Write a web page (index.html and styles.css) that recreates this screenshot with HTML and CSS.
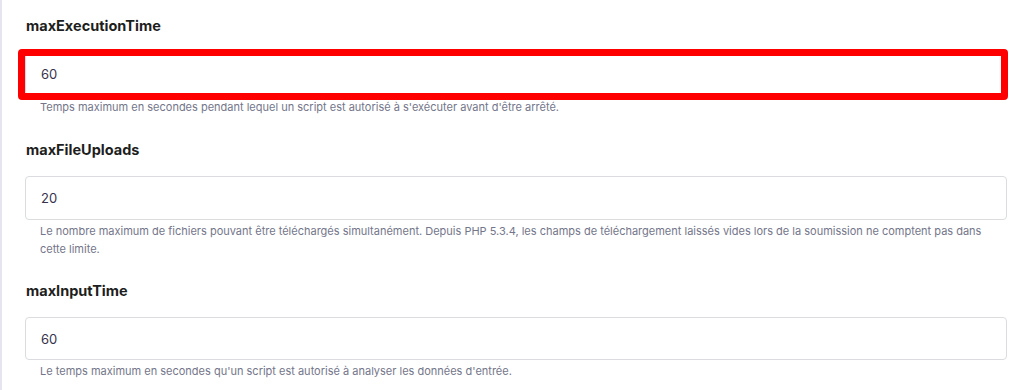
FILE: index.html
```html
<!DOCTYPE html>
<html lang="fr">
<head>
    <meta charset="UTF-8">
    <title>PHP options</title>
    <link rel="stylesheet" href="styles.css">
</head>
<body>
    <div class="page">
        <div class="field">
            <label class="field-label" for="maxExecutionTime">maxExecutionTime</label>
            <div class="field-box">
                <input class="field-input" id="maxExecutionTime" type="text" value="60">
                <span class="highlight"></span>
            </div>
            <p class="field-help">Temps maximum en secondes pendant lequel un script est autorisé à s'exécuter avant d'être arrêté.</p>
        </div>

        <div class="field">
            <label class="field-label" for="maxFileUploads">maxFileUploads</label>
            <div class="field-box">
                <input class="field-input" id="maxFileUploads" type="text" value="20">
            </div>
            <p class="field-help">Le nombre maximum de fichiers pouvant être téléchargés simultanément. Depuis PHP 5.3.4, les champs de téléchargement laissés vides lors de la soumission ne comptent pas dans cette limite.</p>
        </div>

        <div class="field">
            <label class="field-label" for="maxInputTime">maxInputTime</label>
            <div class="field-box">
                <input class="field-input short" id="maxInputTime" type="text" value="60">
            </div>
            <p class="field-help">Le temps maximum en secondes qu'un script est autorisé à analyser les données d'entrée.</p>
        </div>
    </div>
</body>
</html>
```

FILE: styles.css
```css
body {
    margin: 0;
    font-family: Inter, "Noto Sans", sans-serif;
    background-color: #fff;
}
.page {
    border-left: 2px solid #e6e5ef;
    padding: 16px 17px 0 23px;
    height: 390px;
    box-sizing: border-box;
    overflow: hidden;
}
.field {
    margin-bottom: 24px;
}
.field:last-child .field-label {
    margin-top: -1px;
}
.field-label {
    display: block;
    font-size: 14.5px;
    font-weight: 700;
    line-height: 20px;
    color: #1d1e20;
    margin-bottom: 16px;
    padding-left: 1px;
}
.field-box {
    position: relative;
}
.field-input {
    display: block;
    width: 100%;
    height: 44px;
    box-sizing: border-box;
    border: 1px solid #dadce0;
    border-radius: 4px;
    padding: 0 15px;
    font-family: inherit;
    font-size: 13px;
    color: #36344d;
    background: #fff;
    outline: none;
}
.field-input.short {
    height: 43px;
}
.highlight {
    position: absolute;
    left: -7px;
    top: -3px;
    width: 990px;
    height: 51px;
    box-sizing: border-box;
    border: 7px solid #ff0000;
    border-radius: 4px;
    pointer-events: none;
}
.field-help {
    margin: 2px 0 0;
    padding: 0 15px;
    font-size: 11px;
    line-height: 18px;
    color: #74768a;
}
```
